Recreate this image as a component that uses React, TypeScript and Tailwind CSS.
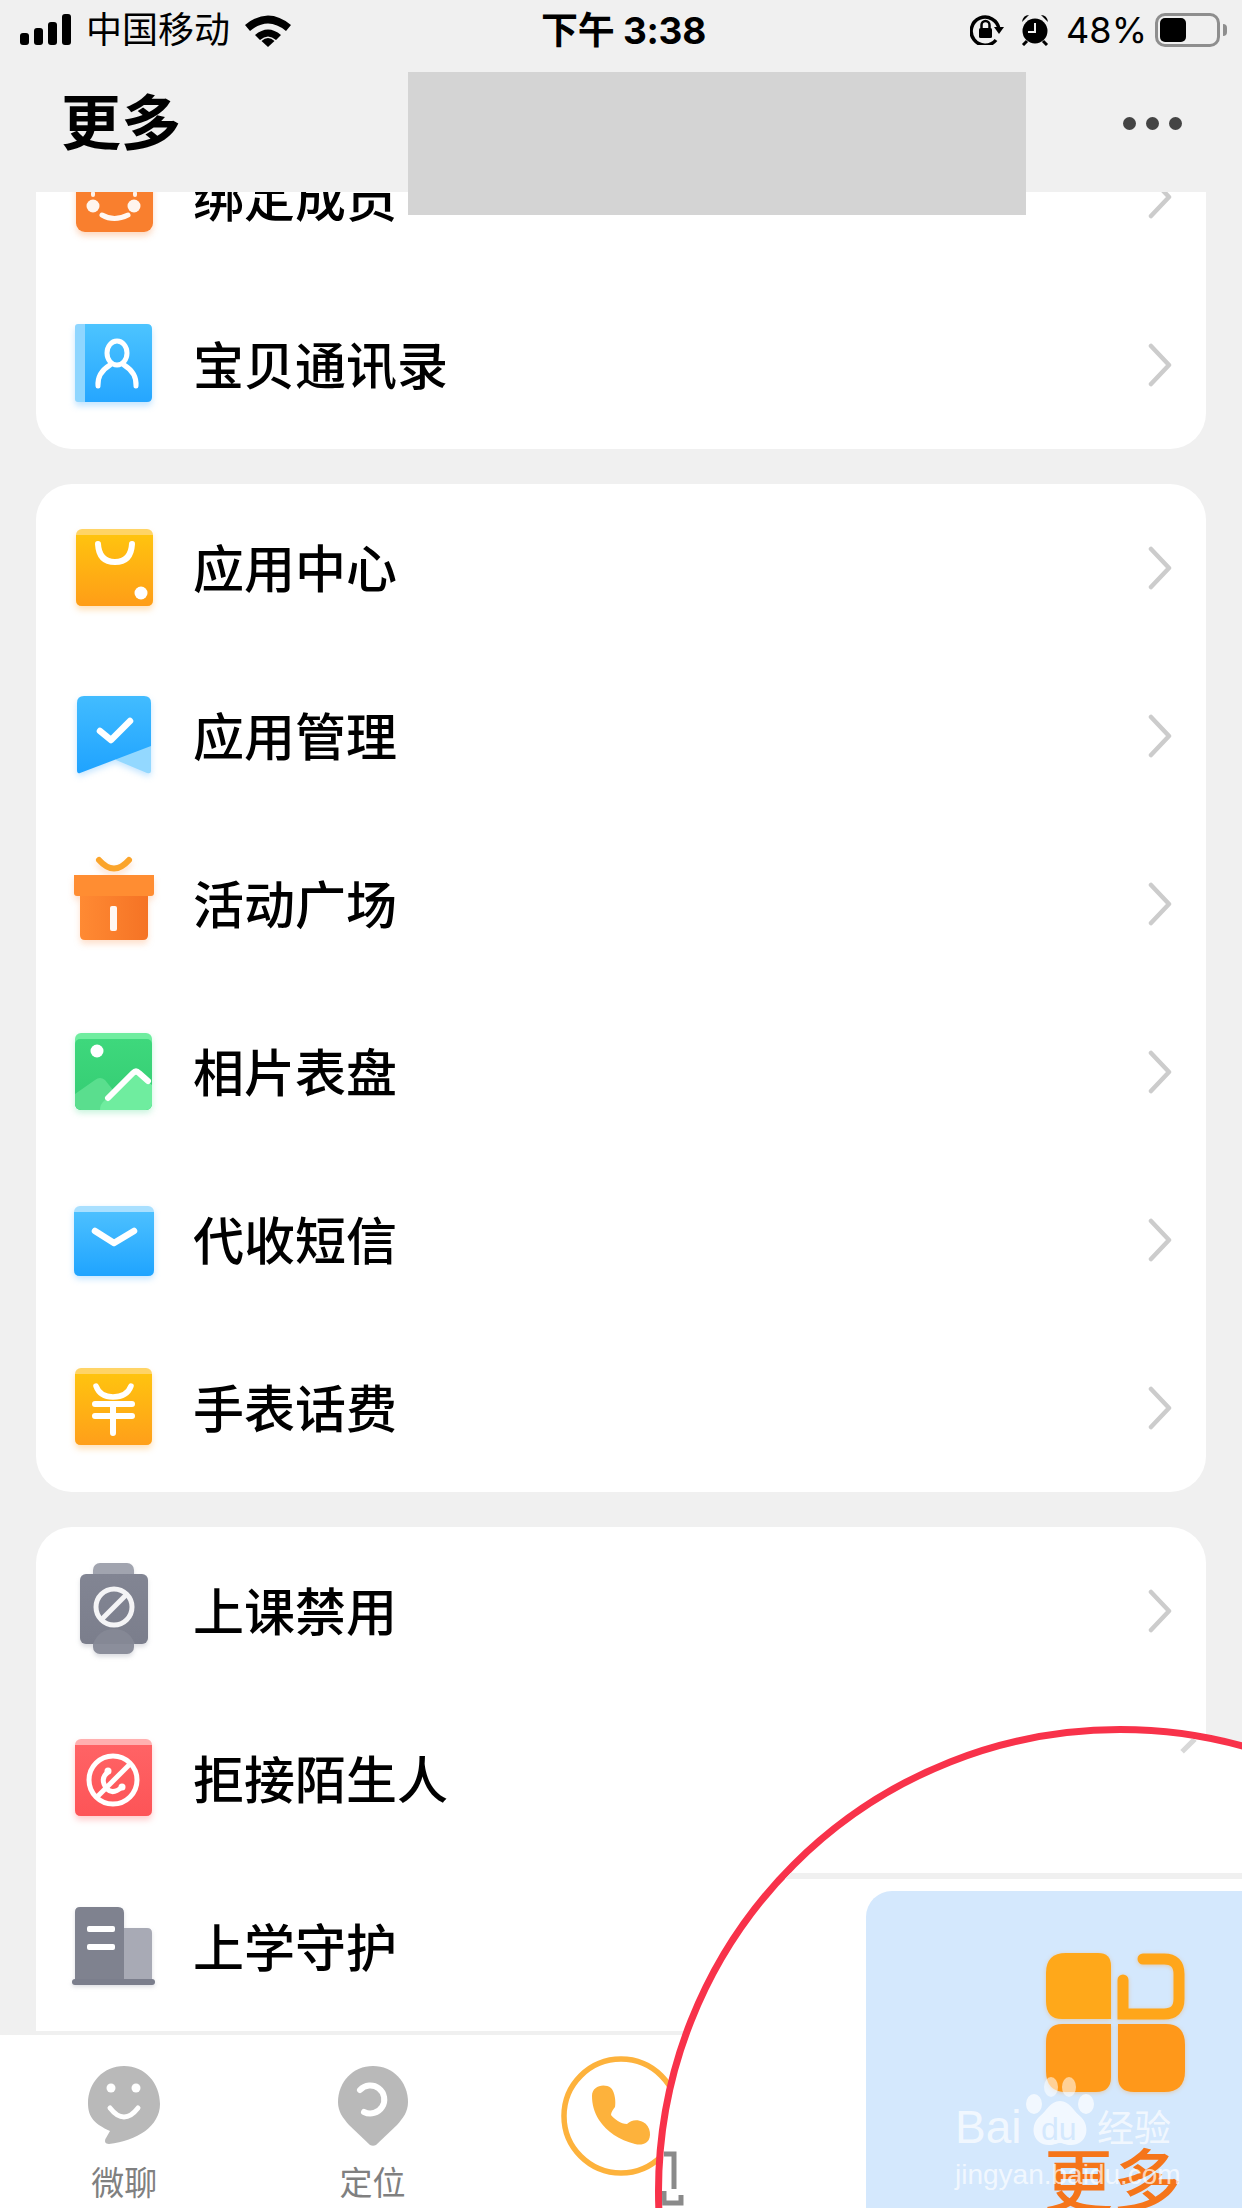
const Chevron = () => (
  <svg width="24" height="44" viewBox="0 0 24 44" className="shrink-0">
    <path d="M3 3 L21 22 L3 41" fill="none" stroke="#cccccc" strokeWidth="4.5" strokeLinecap="round" strokeLinejoin="round" />
  </svg>
);

const Grad = ({ id, from, to }: { id: string; from: string; to: string }) => (
  <linearGradient id={id} x1="0" y1="0" x2="0" y2="1">
    <stop offset="0" stopColor={from} />
    <stop offset="1" stopColor={to} />
  </linearGradient>
);

const slot = "w-[90px] h-[100px] shrink-0";

const BindIcon = () => (
  <svg viewBox="0 0 90 100" className={`${slot} drop-shadow-[0_4px_3px_rgba(250,130,50,0.3)]`}>
    <rect x="7" y="10" width="77" height="75" rx="9" fill="#f97f2e" />
    <rect x="22" y="44" width="4" height="6" rx="2" fill="#fff" opacity="0.9" />
    <rect x="64" y="44" width="4" height="6" rx="2" fill="#fff" opacity="0.9" />
    <circle cx="24" cy="59" r="6.5" fill="#fff" opacity="0.92" />
    <circle cx="65" cy="59" r="6.5" fill="#fff" opacity="0.92" />
    <path d="M33 68 Q45 75 59 68" fill="none" stroke="#fff" strokeWidth="5" strokeLinecap="round" opacity="0.95" />
  </svg>
);

const ContactsIcon = () => (
  <svg viewBox="0 0 90 100" className={`${slot} drop-shadow-[0_4px_3px_rgba(60,170,255,0.3)]`}>
    <defs>
      <Grad id="contacts" from="#4cc4ff" to="#25a6ff" />
    </defs>
    <path d="M9 9 H30 V87 H9 Q6 87 6 84 V12 Q6 9 9 9 Z" fill="#8fd6ff" />
    <path d="M16 9 H78 Q83 9 83 14 V82 Q83 87 78 87 H16 Z" fill="url(#contacts)" />
    <ellipse cx="48" cy="38" rx="10" ry="12" fill="none" stroke="#fff" strokeWidth="5" />
    <path d="M29 71 Q28 58 41 50 M67 71 Q68 58 55 50" fill="none" stroke="#fff" strokeWidth="5" strokeLinecap="round" />
  </svg>
);

const BagIcon = () => (
  <svg viewBox="0 0 90 100" className={`${slot} drop-shadow-[0_4px_3px_rgba(255,160,30,0.3)]`}>
    <defs>
      <Grad id="bag" from="#ffc30f" to="#ff9d17" />
    </defs>
    <rect x="7" y="11" width="77" height="77" rx="6" fill="#ffd466" />
    <path d="M7 17 H84 V82 Q84 88 78 88 H13 Q7 88 7 82 Z" fill="url(#bag)" />
    <path d="M29 26 Q30 44 46 44 Q62 44 63 26" fill="none" stroke="#fff" strokeWidth="6" strokeLinecap="round" />
    <circle cx="72" cy="75" r="6.5" fill="#fff" />
  </svg>
);

const AppManageIcon = () => (
  <svg viewBox="0 0 90 100" className={`${slot} drop-shadow-[0_3px_3px_rgba(60,170,255,0.3)]`}>
    <defs>
      <Grad id="manage" from="#42bcff" to="#1fa3ff" />
    </defs>
    <path d="M48 68 L82 59 V85 Q82 88 78 87 L47 74 Z" fill="#93d8ff" />
    <path d="M15 10 H75 Q82 10 82 17 V60 L11 87 Q8 88 8 84 V17 Q8 10 15 10 Z" fill="url(#manage)" />
    <path d="M31 45 L42 54 L61 35" fill="none" stroke="#fff" strokeWidth="6.5" strokeLinecap="round" strokeLinejoin="round" />
  </svg>
);

const GiftIcon = () => (
  <svg viewBox="0 0 90 100" className={`${slot} drop-shadow-[0_4px_3px_rgba(250,130,50,0.25)]`}>
    <defs>
      <linearGradient id="giftBody" x1="0" y1="0" x2="1" y2="0">
        <stop offset="0" stopColor="#ff8a33" />
        <stop offset="1" stopColor="#f57325" />
      </linearGradient>
    </defs>
    <path d="M30 6 Q45 23 60 6" fill="none" stroke="#fba42a" strokeWidth="6" strokeLinecap="round" />
    <path d="M11 42 H79 V81 Q79 86 74 86 H16 Q11 86 11 81 Z" fill="url(#giftBody)" />
    <path d="M5 21 H85 V39 Q85 42 82 42 H8 Q5 42 5 39 Z" fill="#ff8d32" />
    <rect x="41" y="52" width="7" height="25" rx="2" fill="#fff" opacity="0.95" />
  </svg>
);

const PhotoIcon = () => (
  <svg viewBox="0 0 90 100" className={`${slot} drop-shadow-[0_3px_3px_rgba(70,220,140,0.3)]`}>
    <defs>
      <Grad id="photo" from="#3ed87c" to="#34cc73" />
      <clipPath id="photoClip">
        <rect x="6" y="11" width="77" height="77" rx="6" />
      </clipPath>
    </defs>
    <g clipPath="url(#photoClip)">
      <rect x="6" y="11" width="77" height="77" fill="#6fed9f" />
      <rect x="6" y="17" width="77" height="71" rx="5" fill="url(#photo)" />
      <path d="M6 72 L26 58 Q31 54 36 58 L60 88 H6 Z" fill="#5ade8e" />
      <path d="M31 88 Q31 82 36 78 L62 51 Q66 48 70 52 L83 63 V88 Z" fill="#6fed9f" />
    </g>
    <circle cx="28" cy="29" r="6.5" fill="#fff" />
    <path d="M39 76 L64 51 Q67 48 70 51 L79 59" fill="none" stroke="#fff" strokeWidth="6" strokeLinecap="round" strokeLinejoin="round" />
  </svg>
);

const MailIcon = () => (
  <svg viewBox="0 0 90 100" className={`${slot} drop-shadow-[0_3px_3px_rgba(60,170,255,0.3)]`}>
    <defs>
      <Grad id="mail" from="#4cc0ff" to="#1fa4ff" />
    </defs>
    <rect x="5" y="16" width="80" height="70" rx="6" fill="#a9e0ff" />
    <path d="M5 22 H85 V80 Q85 86 79 86 H11 Q5 86 5 80 Z" fill="url(#mail)" />
    <path d="M26 41 L45 53 L65 41" fill="none" stroke="#fff" strokeWidth="6.5" strokeLinecap="round" strokeLinejoin="round" />
  </svg>
);

const YuanIcon = () => (
  <svg viewBox="0 0 90 100" className={`${slot} drop-shadow-[0_4px_3px_rgba(255,160,30,0.3)]`}>
    <defs>
      <Grad id="yuan" from="#ffc30f" to="#ff9f1a" />
    </defs>
    <rect x="6" y="10" width="77" height="77" rx="6" fill="#ffd466" />
    <path d="M6 16 H83 V81 Q83 87 77 87 H12 Q6 87 6 81 Z" fill="url(#yuan)" />
    <path d="M27 28 Q31 39 44 39 Q58 39 62 28" fill="none" stroke="#fff" strokeWidth="5.5" strokeLinecap="round" />
    <path d="M26 46 H63 M26 58 H63 M44 46 V75" fill="none" stroke="#fff" strokeWidth="6" strokeLinecap="round" />
  </svg>
);

const WatchIcon = () => (
  <svg viewBox="0 0 90 100" className={`${slot} drop-shadow-[0_3px_2px_rgba(120,125,140,0.25)]`}>
    <defs>
      <Grad id="watch" from="#828593" to="#7b7e8c" />
    </defs>
    <rect x="24" y="2" width="41" height="40" rx="7" fill="#a1a4af" />
    <rect x="24" y="60" width="41" height="33" rx="7" fill="#8b8e9b" />
    <rect x="11" y="13" width="68" height="70" rx="6" fill="url(#watch)" />
    <path d="M24 83 Q30 68 45 68 Q60 68 66 83 Z" fill="#858895" />
    <circle cx="45" cy="46" r="18" fill="none" stroke="#f4f4f6" strokeWidth="5" />
    <path d="M33 58 L57 34" stroke="#f4f4f6" strokeWidth="5" />
  </svg>
);

const BlockCallIcon = () => (
  <svg viewBox="0 0 90 100" className={`${slot} drop-shadow-[0_4px_3px_rgba(255,90,90,0.3)]`}>
    <defs>
      <Grad id="block" from="#ff6365" to="#fd5457" />
    </defs>
    <rect x="6" y="10" width="77" height="77" rx="6" fill="#ffb0b0" />
    <path d="M6 16 H83 V81 Q83 87 77 87 H12 Q6 87 6 81 Z" fill="url(#block)" />
    <circle cx="44" cy="51" r="24" fill="none" stroke="#fff" strokeWidth="5" />
    <path d="M28 68 L60 36" stroke="#fff" strokeWidth="5" />
    <path d="M39 43 Q30 50 38 60 Q44 66 53 58" fill="none" stroke="#fff" strokeWidth="5" strokeLinecap="round" />
    <circle cx="39" cy="42" r="3.5" fill="#fff" />
    <circle cx="53" cy="58" r="3.5" fill="#fff" />
  </svg>
);

const BuildingIcon = () => (
  <svg viewBox="0 0 90 100" className={`${slot} drop-shadow-[0_2px_2px_rgba(120,125,140,0.25)]`}>
    <path d="M55 31 H78 Q83 31 83 36 V84 H55 Z" fill="#a8aab5" />
    <path d="M11 10 H49 Q55 10 55 16 V84 H6 V15 Q6 10 11 10 Z" fill="#7f828f" />
    <rect x="3" y="82" width="83" height="6" rx="3" fill="#7b7e8c" />
    <rect x="18" y="29" width="28" height="6" rx="2" fill="#fff" />
    <rect x="18" y="47" width="28" height="6" rx="2" fill="#fff" />
  </svg>
);

const Row = ({ icon, label }: { icon: React.ReactNode; label: string }) => (
  <div className="h-[168px] flex items-center pl-[33px] pr-[34px]">
    {icon}
    <span className="ml-[34px] mt-[2px] flex-1 text-[51px] leading-none font-medium text-black">{label}</span>
    <Chevron />
  </div>
);

const StatusBar = () => (
  <div className="h-[60px] flex items-center justify-between pl-[20px] pr-[15px] text-black">
    <div className="flex items-center w-[300px]">
      <svg width="51" height="32" viewBox="0 0 51 32">
        <rect x="0" y="19" width="9" height="12" rx="3" fill="#000" />
        <rect x="14" y="14" width="9" height="17" rx="3" fill="#000" />
        <rect x="28" y="8" width="9" height="23" rx="3" fill="#000" />
        <rect x="42" y="0" width="9" height="31" rx="3" fill="#000" />
      </svg>
      <span className="ml-[15px] text-[36px] leading-none">中国移动</span>
      <svg width="46" height="34" viewBox="0 0 46 34" className="ml-[15px]">
        <path d="M0 12 Q23 -7 46 12 L41 18 Q23 3 5 18 Z" fill="#000" />
        <path d="M10 22 Q23 11 36 22 L31 27 Q23 20 15 27 Z" fill="#000" />
        <path d="M16.5 28 Q23 22 29.5 28 L23 34 Z" fill="#000" />
      </svg>
    </div>
    <span className="text-[37px] leading-none font-bold tracking-[-0.3px]">下午 3:38</span>
    <div className="flex items-center justify-end w-[300px]">
      <svg width="34" height="30" viewBox="0 0 34 30">
        <path d="M26 25 A14 14 0 1 1 29 14" fill="none" stroke="#000" strokeWidth="3.5" />
        <path d="M24 12 H34 L29 19 Z" fill="#000" />
        <rect x="9" y="13" width="13" height="10" rx="1.5" fill="#000" />
        <path d="M11.5 13 V10 A4 4 0 0 1 19.5 10 V13" fill="none" stroke="#000" strokeWidth="2.5" />
      </svg>
      <svg width="30" height="32" viewBox="0 0 30 32" className="ml-[16px]">
        <circle cx="15" cy="17" r="12.5" fill="#000" />
        <path d="M15 9 V18 H8" fill="none" stroke="#f0f0f0" strokeWidth="2" />
        <path d="M2 8 Q3 1 9 1 Z M28 8 Q27 1 21 1 Z" fill="#000" />
        <path d="M7 27 L3 31 M23 27 L27 31" stroke="#000" strokeWidth="3" />
      </svg>
      <span className="ml-[16px] text-[36px] leading-none">48%</span>
      <div className="ml-[8px] w-[65px] h-[34px] rounded-[10px] border-[3px] border-[#8e8e8e] p-[2px] flex">
        <div className="w-[26px] rounded-[5px] bg-black" />
      </div>
      <div className="ml-[3px] w-[4px] h-[12px] rounded-r-full bg-[#8e8e8e]" />
    </div>
  </div>
);

const Header = () => (
  <div className="h-[132px] relative flex items-center justify-between pl-[61px] pr-[60px]">
    <span className="text-[60px] leading-none font-bold text-black -mt-[6px]">更多</span>
    <div className="flex gap-[10px] -mt-[6px]">
      <div className="w-[13px] h-[13px] rounded-full bg-[#444444]" />
      <div className="w-[13px] h-[13px] rounded-full bg-[#444444]" />
      <div className="w-[13px] h-[13px] rounded-full bg-[#444444]" />
    </div>
    {/* grey block covering the page title */}
    <div className="absolute left-[408px] top-[12px] w-[618px] h-[143px] bg-[#d4d4d4] z-10" />
  </div>
);

const TabBar = () => (
  <div className="h-[176px] shrink-0 bg-white border-t-[3px] border-t-[#f0f0f0] grid grid-cols-5 text-[#808080]">
    <div className="flex flex-col items-center pt-[31px]">
      <svg width="74" height="78" viewBox="0 0 74 78">
        <path d="M37 0 C58 0 73 17 73 38 C73 60 50 75 22 78 C18 78 17 75 19 72 L23 65 C8 58 1 52 1 37 C1 17 16 0 37 0 Z" fill="#b9b9b9" />
        <circle cx="24" cy="22" r="4.5" fill="#fff" />
        <circle cx="49" cy="22" r="4.5" fill="#fff" />
        <path d="M23 42 Q37 60 51 42" fill="none" stroke="#fff" strokeWidth="5" strokeLinecap="round" />
      </svg>
      <span className="mt-[23px] text-[33px] leading-none">微聊</span>
    </div>
    <div className="flex flex-col items-center pt-[31px]">
      <svg width="72" height="80" viewBox="0 0 72 80">
        <path d="M36 0 C56 0 71 16 71 36 C71 46 66 52 60 59 L39 79 C37 80 35 80 33 79 L12 59 C6 52 1 46 1 36 C1 16 16 0 36 0 Z" fill="#b9b9b9" />
        <path d="M23 24 A14 14 0 1 1 27 46" fill="none" stroke="#fff" strokeWidth="6" strokeLinecap="round" />
      </svg>
      <span className="mt-[21px] text-[33px] leading-none">定位</span>
    </div>
    <div className="flex flex-col items-center pt-[21px]">
      <svg width="120" height="120" viewBox="0 0 120 120">
        <circle cx="60" cy="60" r="57" fill="none" stroke="#fdb23c" strokeWidth="5.5" />
        <path d="M31 40 C31 30 43 27 50 32 C54 36 55 46 54 51 C52 54 50 56 50 59 C53 63 60 68 66 68 C70 64 76 63 82 66 C90 70 91 82 86 86 C82 89 78 89 74 88 C58 84 46 76 38 64 C33 56 31 48 31 40 Z" fill="#fdb23c" />
      </svg>
    </div>
    <div />
    <div />
  </div>
);

const Watermark = () => (
  <div className="absolute left-[293px] top-[344px] w-[230px] text-white/70">
    <div className="relative h-[72px]">
      <span className="absolute left-0 top-[27px] font-['Liberation_Sans'] text-[46px] leading-none">Bai</span>
      <svg width="70" height="72" viewBox="0 0 70 72" className="absolute left-[70px] top-0">
        <ellipse cx="26" cy="10" rx="7" ry="10" fill="#ffffff" opacity="0.55" />
        <ellipse cx="44" cy="10" rx="7" ry="10" fill="#ffffff" opacity="0.55" />
        <ellipse cx="9" cy="27" rx="8" ry="10" fill="#ffffff" opacity="0.7" />
        <ellipse cx="61" cy="27" rx="8" ry="10" fill="#ffffff" opacity="0.7" />
        <path d="M35 24 C45 24 48 34 56 40 C66 50 62 68 46 68 C40 68 38 66 35 66 C32 66 30 68 24 68 C8 68 4 50 14 40 C22 34 25 24 35 24 Z" fill="#ffffff" opacity="0.7" />
      </svg>
      <span className="absolute left-[86px] top-[36px] font-['Liberation_Sans'] text-[32px] leading-none text-[#d4e8fd]">du</span>
      <span className="absolute left-[142px] top-[33px] text-[37px] leading-none">经验</span>
    </div>
    <div className="mt-[12px] font-['Liberation_Sans'] text-[28px] leading-none whitespace-nowrap">jingyan.baidu.com</div>
  </div>
);

const MagnifiedMore = () => (
  <div className="absolute left-[655px] top-[1726px] w-[930px] h-[930px] rounded-full border-[7px] border-[#f8324a] bg-white overflow-hidden z-20">
    {/* leftovers of the enlarged screen: chevron tip, tab divider, label stroke */}
    <div className="absolute left-[515px] top-[4px] w-[18px] h-[12px] border-b-[5px] border-b-[#d8d8d8] -rotate-45" />
    <div className="absolute left-0 top-[140px] w-full h-[6px] bg-[#f0f0f0]" />
    <svg width="22" height="60" viewBox="0 0 22 60" className="absolute left-[0px] top-[418px]">
      <path d="M2 3 H12 V38 M2 40 V52 H19 V44" fill="none" stroke="#8a8a8a" strokeWidth="5" />
    </svg>
    <div className="absolute left-[204px] top-[158px] w-[600px] h-[600px] rounded-[26px] bg-[#d4e8fd] pl-[180px] pt-[62px]">
      <svg width="140" height="140" viewBox="0 0 140 140" className="drop-shadow-[0_1px_2px_rgba(255,150,30,0.35)]">
        <path d="M20 0 H52 Q65 0 65 13 V66 H16 Q0 66 0 48 V20 Q0 0 20 0 Z" fill="#ffa81a" />
        <path d="M0 90 Q0 71 16 71 H65 V124 Q65 139 50 139 H20 Q0 139 0 118 Z" fill="#ff9a1a" />
        <path d="M72 71 H120 Q139 71 139 92 V118 Q139 139 118 139 H88 Q72 139 72 124 Z" fill="#ff981a" />
        <path d="M97 6 H118 Q133 6 133 21 V46 Q133 61 118 61 H77 V27" fill="none" stroke="#ffa61a" strokeWidth="11" strokeLinecap="round" />
      </svg>
      <div className="mt-[55px] -ml-[2px] text-[69px] leading-none font-medium text-[#f5751a]">更多</div>
    </div>
    <Watermark />
  </div>
);

export default function App() {
  return (
    <div className="relative w-[1242px] h-[2208px] overflow-hidden flex flex-col bg-[#f0f0f0] font-['Inter','Noto_Sans_CJK_SC',sans-serif]">
      <StatusBar />
      <Header />
      <div className="flex-1 overflow-hidden px-[36px]">
        <div className="-mt-[79px] flex flex-col gap-[35px]">
          <div className="bg-white rounded-[36px]">
            <Row icon={<BindIcon />} label="绑定成员" />
            <Row icon={<ContactsIcon />} label="宝贝通讯录" />
          </div>
          <div className="bg-white rounded-[36px]">
            <Row icon={<BagIcon />} label="应用中心" />
            <Row icon={<AppManageIcon />} label="应用管理" />
            <Row icon={<GiftIcon />} label="活动广场" />
            <Row icon={<PhotoIcon />} label="相片表盘" />
            <Row icon={<MailIcon />} label="代收短信" />
            <Row icon={<YuanIcon />} label="手表话费" />
          </div>
          <div className="bg-white rounded-t-[36px]">
            <Row icon={<WatchIcon />} label="上课禁用" />
            <Row icon={<BlockCallIcon />} label="拒接陌生人" />
            <Row icon={<BuildingIcon />} label="上学守护" />
          </div>
        </div>
      </div>
      <TabBar />
      <MagnifiedMore />
    </div>
  );
}
